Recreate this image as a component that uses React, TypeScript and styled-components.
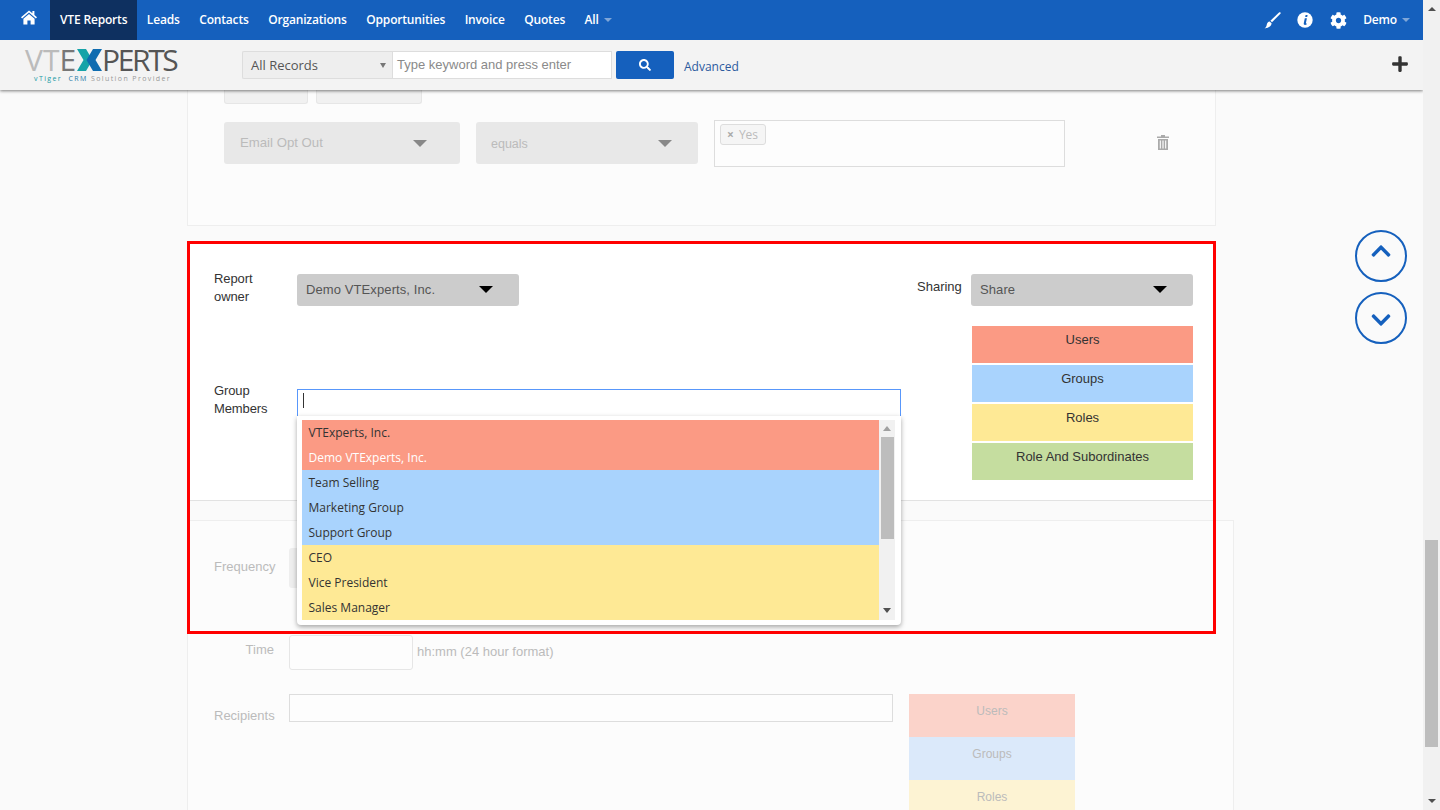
import React from "react";
import styled, { createGlobalStyle } from "styled-components";
import { FaCog, FaPlus, FaSearch, FaChevronUp, FaChevronDown } from "react-icons/fa";

const Global = createGlobalStyle`
  html, body { margin: 0; padding: 0; height: 100%; overflow: hidden; background: #fafafa; }
  * { box-sizing: border-box; }
`;

const BLUE = "#1560bd";
const RED = "#fb9a84";
const SKY = "#a9d3fd";
const YELLOW = "#fee995";
const GREEN = "#c5dd9f";

const Shell = styled.div`
  display: flex;
  width: 1440px;
  height: 810px;
  overflow: hidden;
`;

const Viewport = styled.div`
  position: relative;
  width: 1423px;
  height: 810px;
  overflow: hidden;
  background: #fafafa;
`;

const Header = styled.header`
  position: relative;
  z-index: 5;
  box-shadow: 0 1px 3px rgba(0, 0, 0, 0.5);
`;

const TopBar = styled.nav`
  display: flex;
  align-items: stretch;
  height: 40px;
  background: ${BLUE};
  font: 600 12px/40px "Open Sans", sans-serif;
  letter-spacing: -0.17px;
  color: #fff;
`;

const HomeLink = styled.div`
  display: flex;
  align-items: flex-start;
  width: 50px;
  padding: 10px 0 0 21px;
`;

const NavItem = styled.div<{ $active?: boolean }>`
  display: flex;
  align-items: center;
  padding: 0 9.5px 0 10px;
  background: ${(p) => (p.$active ? "#0e3060" : "transparent")};
`;

const NavCaret = styled.span`
  display: block;
  width: 0;
  height: 0;
  margin-left: 5px;
  border-left: 4px solid transparent;
  border-right: 4px solid transparent;
  border-top: 4px solid #7fa6d8;
`;

const TopRight = styled.div`
  display: flex;
  align-items: center;
  margin-left: auto;
  padding-right: 13px;
`;

const TopIcon = styled.span<{ $gap: number; $size: number }>`
  display: flex;
  margin-right: ${(p) => p.$gap}px;
  font-size: ${(p) => p.$size}px;
`;

const SubBar = styled.div`
  display: flex;
  align-items: flex-start;
  height: 50px;
  background: #f3f3f3;
  padding-top: 11px;
`;

const Logo = styled.div`
  width: 242px;
  margin-top: -4px;
  padding-left: 25px;
`;

const LogoWord = styled.div`
  display: flex;
  align-items: center;
  height: 26px;
  font: 400 30px/26px "Open Sans", sans-serif;
`;

const LogoPart = styled.span<{ $color: string; $track: number }>`
  color: ${(p) => p.$color};
  letter-spacing: ${(p) => p.$track}px;
`;

const LogoMark = styled.svg`
  width: 25px;
  height: 22px;
`;

const Tagline = styled.div`
  padding-left: 9px;
  font: 400 7px/12px "Open Sans", sans-serif;
  letter-spacing: 1.4px;
  white-space: pre;
  color: #999;
`;

const TagPart = styled.span<{ $color: string }>`
  color: ${(p) => p.$color};
`;

const SearchScope = styled.div`
  display: flex;
  align-items: center;
  justify-content: space-between;
  width: 150px;
  height: 28px;
  padding: 0 6px 0 8px;
  background: #eee;
  border: 1px solid #ddd;
  border-right: 0;
  border-radius: 2px 0 0 2px;
  font: 400 13px "Open Sans", sans-serif;
  color: #555;
`;

const SearchInput = styled.div`
  width: 220px;
  height: 28px;
  padding-left: 4px;
  background: #fff;
  border: 1px solid #ddd;
  font: 400 13px/25px "Liberation Sans", sans-serif;
  color: #8a8a8a;
`;

const SearchButton = styled.div`
  display: flex;
  align-items: center;
  justify-content: center;
  width: 58px;
  height: 28px;
  margin-left: 4px;
  background: ${BLUE};
  border-radius: 2px;
  color: #fff;
  font-size: 12px;
`;

const AdvancedLink = styled.span`
  margin-left: 10px;
  font: 400 12px/32px "Open Sans", sans-serif;
  color: #2c5a9e;
`;

const AddButton = styled.div`
  display: flex;
  margin: 4px 14px 0 auto;
  font-size: 18px;
  color: #333;
`;

const Caret = styled.span<{ $color: string; $w: number; $h: number; $up?: boolean }>`
  display: block;
  flex: none;
  width: 0;
  height: 0;
  border-left: ${(p) => p.$w}px solid transparent;
  border-right: ${(p) => p.$w}px solid transparent;
  ${(p) => (p.$up ? "border-bottom" : "border-top")}: ${(p) => p.$h}px solid ${(p) => p.$color};
`;

const Main = styled.main`
  margin-left: 187px;
`;

const FilterCard = styled.section`
  width: 1029px;
  height: 136px;
  background: #fcfcfc;
  border: 1px solid #eee;
  border-top: 0;
  padding-left: 36px;
`;

const ClippedRow = styled.div`
  display: flex;
  gap: 8px;
`;

const ClippedButton = styled.div<{ $w: number }>`
  width: ${(p) => p.$w}px;
  height: 14px;
  background: #f1f1f1;
  border: 1px solid #e6e6e6;
  border-top: 0;
  border-radius: 0 0 3px 3px;
`;

const FilterRow = styled.div`
  display: flex;
  align-items: flex-start;
  gap: 16px;
  margin-top: 16px;
`;

const FadedSelect = styled.div<{ $w: number; $left: number; $right: number }>`
  display: flex;
  align-items: center;
  justify-content: space-between;
  width: ${(p) => p.$w}px;
  height: 42px;
  margin-top: 2px;
  padding: 0 ${(p) => p.$right}px 0 ${(p) => p.$left}px;
  background: #e8e8e8;
  border-radius: 3px;
  font: 400 13px "Liberation Sans", sans-serif;
  color: #bbb;
`;

const FieldText = styled.span<{ $top: number; $size: number }>`
  position: relative;
  top: ${(p) => p.$top}px;
  font-size: ${(p) => p.$size}px;
`;

const TagBox = styled.div`
  width: 351px;
  height: 47px;
  padding: 3px 5px;
  border: 1px solid #ddd;
  background: #fdfdfd;
`;

const Tag = styled.span`
  display: inline-flex;
  align-items: center;
  gap: 5px;
  width: 46px;
  height: 21px;
  padding: 0 6px;
  background: #f5f5f5;
  border: 1px solid #ddd;
  border-radius: 3px;
  font: 400 12px "Open Sans", sans-serif;
  color: #bbb;
`;

const TagX = styled.span`
  font-weight: 700;
  font-size: 12px;
  color: #aaa;
`;

const TrashIcon = styled.svg`
  flex: none;
  width: 12px;
  height: 15px;
  margin: 15px 0 0 76px;
`;

const SharePanel = styled.section`
  position: relative;
  display: flex;
  justify-content: space-between;
  width: 1029px;
  height: 260px;
  margin-top: 15px;
  padding: 33px 23px 0 27px;
  background: #fff;
  border-bottom: 1px solid #e2e2e2;
`;

const RedFrame = styled.div`
  position: absolute;
  top: 0;
  left: 0;
  z-index: 3;
  width: 1029px;
  height: 393px;
  border: 3px solid #f00;
  pointer-events: none;
`;

const Column = styled.div`
  display: flex;
  flex-direction: column;
`;

const Field = styled.div`
  display: flex;
  align-items: flex-start;
`;

const StackLabel = styled.label<{ $lift: number }>`
  width: 83px;
  margin-top: -${(p) => p.$lift}px;
  font: 400 13px/18px "Liberation Sans", sans-serif;
  letter-spacing: -0.1px;
  color: #333;
`;

const InlineLabel = styled.label`
  width: 54px;
  padding-top: 4px;
  font: 400 13px/18px "Liberation Sans", sans-serif;
  color: #333;
`;

const DarkSelect = styled.div`
  display: flex;
  align-items: center;
  justify-content: space-between;
  width: 222px;
  height: 32px;
  padding: 0 26px 2px 9px;
  background: #ccc;
  border-radius: 3px;
  font: 400 13px "Liberation Sans", sans-serif;
  letter-spacing: 0.1px;
  color: #555;
`;

const ChipList = styled.div`
  display: flex;
  flex-direction: column;
  gap: 2px;
  width: 221px;
  margin: 20px 0 0 55px;
`;

const Chip = styled.div<{ $bg: string }>`
  height: 37px;
  padding-top: 6px;
  background: ${(p) => p.$bg};
  text-align: center;
  font: 400 13px/16px "Liberation Sans", sans-serif;
  color: #333;
`;

const GroupField = styled(Field)`
  position: relative;
  margin-top: 83px;
`;

const MemberInput = styled.div`
  width: 604px;
  height: 27px;
  padding: 3px 5px;
  border: 1px solid #5897fb;
  border-bottom: 0;
  background: #fff;
`;

const TextCursor = styled.div`
  width: 1px;
  height: 15px;
  background: #333;
`;

const Dropdown = styled.div`
  position: absolute;
  top: 27px;
  left: 83px;
  z-index: 2;
  display: flex;
  width: 604px;
  height: 209px;
  padding: 4px 5px;
  background: #fff;
  border-radius: 0 0 4px 4px;
  box-shadow: 0 2px 5px rgba(0, 0, 0, 0.35);
`;

const OptionList = styled.ul`
  width: 577px;
  height: 200px;
  margin: 0;
  padding: 0;
  list-style: none;
`;

const Option = styled.li<{ $bg: string; $selected?: boolean }>`
  height: 25px;
  padding-left: 6.5px;
  background: ${(p) => p.$bg};
  font: 400 12px/25px "Open Sans", sans-serif;
  color: ${(p) => (p.$selected ? "#fff" : "#333")};
`;

const ListScroll = styled.div`
  display: flex;
  flex-direction: column;
  align-items: center;
  flex: none;
  width: 16px;
  height: 200px;
  padding: 6px 0 7px;
  background: #f1f1f1;
`;

const ListThumb = styled.div`
  width: 13px;
  height: 102px;
  margin: 6px 0 auto;
  background: #bdbdbd;
`;

const ScheduleCard = styled.section`
  width: 1047px;
  height: 300px;
  margin-top: 19px;
  padding: 27px 0 0 26px;
  background: #fcfcfc;
  border: 1px solid #eee;
`;

const ScheduleRow = styled.div<{ $mt?: number }>`
  display: flex;
  align-items: flex-start;
  margin-top: ${(p) => p.$mt ?? 0}px;
`;

const FadedLabel = styled.label<{ $top: number }>`
  width: 60px;
  margin-right: 15px;
  padding-top: ${(p) => p.$top}px;
  text-align: right;
  font: 400 13px/16px "Liberation Sans", sans-serif;
  color: #bbb;
`;

const FrequencySelect = styled.div`
  width: 124px;
  height: 40px;
  background: #eee;
  border-radius: 3px;
`;

const TimeInput = styled.div`
  width: 124px;
  height: 35px;
  background: #fdfdfd;
  border: 1px solid #e6e6e6;
  border-radius: 3px;
`;

const Hint = styled.span`
  margin: 9px 0 0 4px;
  font: 400 13px/16px "Liberation Sans", sans-serif;
  color: #bbb;
`;

const RecipientInput = styled.div`
  width: 604px;
  height: 28px;
  background: #fdfdfd;
  border: 1px solid #ddd;
`;

const FadedChips = styled.div`
  width: 166px;
  margin-left: 16px;
`;

const FadedChip = styled.div<{ $bg: string }>`
  height: 43px;
  padding-top: 9px;
  background: ${(p) => p.$bg};
  text-align: center;
  font: 400 12px/16px "Liberation Sans", sans-serif;
  color: #bbb;
`;

const FloatButtons = styled.div`
  position: absolute;
  top: 230px;
  left: 1355px;
  z-index: 4;
  display: flex;
  flex-direction: column;
  gap: 10px;
`;

const RoundButton = styled.div<{ $shift: number }>`
  display: flex;
  align-items: center;
  justify-content: center;
  width: 52px;
  height: 52px;
  padding-top: ${(p) => Math.max(p.$shift, 0) * 2}px;
  padding-bottom: ${(p) => Math.max(-p.$shift, 0) * 2}px;
  border: 2px solid ${BLUE};
  border-radius: 50%;
  color: ${BLUE};
  font-size: 22px;
`;

const PageScroll = styled.div`
  display: flex;
  flex-direction: column;
  align-items: center;
  width: 17px;
  height: 810px;
  padding: 7px 0;
  background: #f1f1f1;
`;

const PageThumb = styled.div`
  width: 13px;
  height: 207px;
  margin: auto 0 52px;
  background: #bdbdbd;
`;

const navItems = ["Leads", "Contacts", "Organizations", "Opportunities", "Invoice", "Quotes"];

const options = [
  { label: "VTExperts, Inc.", bg: RED },
  { label: "Demo VTExperts, Inc.", bg: RED, selected: true },
  { label: "Team Selling", bg: SKY },
  { label: "Marketing Group", bg: SKY },
  { label: "Support Group", bg: SKY },
  { label: "CEO", bg: YELLOW },
  { label: "Vice President", bg: YELLOW },
  { label: "Sales Manager", bg: YELLOW },
];

const chips = [
  { label: "Users", bg: RED },
  { label: "Groups", bg: SKY },
  { label: "Roles", bg: YELLOW },
  { label: "Role And Subordinates", bg: GREEN },
];

function HomeGlyph() {
  return (
    <svg width="16" height="15" viewBox="0 0 16 15" fill="#fff">
      <path d="M8 0.4 L11.4 3.3 V1 H13.4 V5 L16 7.2 L14.9 8.4 L8 2.6 L1.1 8.4 L0 7.2 Z" />
      <path d="M8 4 L13.6 8.7 V14.6 H9.6 V10.4 H6.4 V14.6 H2.4 V8.7 Z" />
    </svg>
  );
}

function BrushGlyph() {
  return (
    <svg width="17" height="17" viewBox="0 0 17 17" fill="#fff">
      <path d="M16.4 0.4 C16.9 0.8 16.8 1.3 16.4 1.8 L8 10.2 L6.4 8.8 L15 0.6 C15.5 0.2 16 0.1 16.4 0.4 Z" />
      <path d="M5.6 9.4 L7.6 11.2 C7.4 13.6 5.6 15.6 0.6 16.4 C2.2 15 2.6 13.8 2.8 12.4 C3 10.8 4.2 9.6 5.6 9.4 Z" />
    </svg>
  );
}

function InfoGlyph() {
  return (
    <svg width="16" height="16" viewBox="0 0 16 16">
      <circle cx="8" cy="8" r="7.7" fill="#fff" />
      <path d="M8.6 3 H10.6 L10.2 5 H8.2 Z M7.8 6.2 H9.9 L8.9 11 C8.8 11.5 9.1 11.6 9.8 11.4 L9.6 12.6 C7.9 13.3 6.4 13 6.8 11 Z" fill={BLUE} />
    </svg>
  );
}

export default function App() {
  return (
    <>
      <Global />
      <Shell>
        <Viewport>
          <Header>
            <TopBar>
              <HomeLink>
                <HomeGlyph />
              </HomeLink>
              <NavItem $active>VTE Reports</NavItem>
              {navItems.map((item) => (
                <NavItem key={item}>{item}</NavItem>
              ))}
              <NavItem>
                All
                <NavCaret />
              </NavItem>
              <TopRight>
                <TopIcon $gap={16} $size={16}>
                  <BrushGlyph />
                </TopIcon>
                <TopIcon $gap={17} $size={16}>
                  <InfoGlyph />
                </TopIcon>
                <TopIcon $gap={16} $size={17}>
                  <FaCog />
                </TopIcon>
                Demo
                <NavCaret />
              </TopRight>
            </TopBar>
            <SubBar>
              <Logo>
                <LogoWord>
                  <LogoPart $color="#bbb" $track={0}>VT</LogoPart>
                  <LogoPart $color="#777" $track={1}>E</LogoPart>
                  <LogoMark viewBox="0 0 25 22">
                    <polygon points="0,0 9,0 15.5,11 9,22 0,22 6.5,11" fill="#17a3a8" />
                    <polygon points="25,0 16,0 9.5,11 16,22 25,22 18.5,11" fill="#0f6cb0" />
                  </LogoMark>
                  <LogoPart $color="#555" $track={-2.4}>PERTS</LogoPart>
                </LogoWord>
                <Tagline>
                  <TagPart $color="#1a9aa5">vTiger</TagPart>{"  "}
                  <TagPart $color="#2a7ba8">CRM</TagPart> Solution Provider
                </Tagline>
              </Logo>
              <SearchScope>
                All Records
                <Caret $color="#777" $w={3} $h={5} />
              </SearchScope>
              <SearchInput>Type keyword and press enter</SearchInput>
              <SearchButton>
                <FaSearch />
              </SearchButton>
              <AdvancedLink>Advanced</AdvancedLink>
              <AddButton>
                <FaPlus />
              </AddButton>
            </SubBar>
          </Header>

          <Main>
            <FilterCard>
              <ClippedRow>
                <ClippedButton $w={84} />
                <ClippedButton $w={106} />
              </ClippedRow>
              <FilterRow>
                <FadedSelect $w={236} $left={16} $right={33}>
                  <FieldText $top={-1} $size={13.2}>Email Opt Out</FieldText>
                  <Caret $color="#888" $w={7} $h={7} />
                </FadedSelect>
                <FadedSelect $w={222} $left={15} $right={26}>
                  <FieldText $top={1} $size={12.5}>equals</FieldText>
                  <Caret $color="#888" $w={7} $h={7} />
                </FadedSelect>
                <TagBox>
                  <Tag>
                    <TagX>×</TagX>
                    Yes
                  </Tag>
                </TagBox>
                <TrashIcon viewBox="0 0 12 15" fill="#aaa">
                  <path d="M4 0 H8 V1.5 H12 V3 H0 V1.5 H4 Z" />
                  <path d="M1 4 H11 V15 H1 Z M2.8 5.5 V13.5 H3.9 V5.5 Z M5.4 5.5 V13.5 H6.6 V5.5 Z M8.1 5.5 V13.5 H9.2 V5.5 Z" fillRule="evenodd" />
                </TrashIcon>
              </FilterRow>
            </FilterCard>

            <SharePanel>
              <RedFrame />
              <Column>
                <Field>
                  <StackLabel $lift={4}>
                    Report
                    <br />
                    owner
                  </StackLabel>
                  <DarkSelect>
                    Demo VTExperts, Inc.
                    <Caret $color="#000" $w={7} $h={7} />
                  </DarkSelect>
                </Field>
                <GroupField>
                  <StackLabel $lift={7}>
                    Group
                    <br />
                    Members
                  </StackLabel>
                  <MemberInput>
                    <TextCursor />
                  </MemberInput>
                  <Dropdown>
                    <OptionList>
                      {options.map((o) => (
                        <Option key={o.label} $bg={o.bg} $selected={o.selected}>
                          {o.label}
                        </Option>
                      ))}
                    </OptionList>
                    <ListScroll>
                      <Caret $color="#a0a0a0" $w={4} $h={5} $up />
                      <ListThumb />
                      <Caret $color="#505050" $w={4} $h={5} />
                    </ListScroll>
                  </Dropdown>
                </GroupField>
              </Column>
              <Column>
                <Field>
                  <InlineLabel>Sharing</InlineLabel>
                  <DarkSelect>
                    Share
                    <Caret $color="#000" $w={7} $h={7} />
                  </DarkSelect>
                </Field>
                <ChipList>
                  {chips.map((c) => (
                    <Chip key={c.label} $bg={c.bg}>
                      {c.label}
                    </Chip>
                  ))}
                </ChipList>
              </Column>
            </SharePanel>

            <ScheduleCard>
              <ScheduleRow>
                <FadedLabel $top={11}>Frequency</FadedLabel>
                <FrequencySelect />
              </ScheduleRow>
              <ScheduleRow $mt={47}>
                <FadedLabel $top={7}>Time</FadedLabel>
                <TimeInput />
                <Hint>hh:mm (24 hour format)</Hint>
              </ScheduleRow>
              <ScheduleRow $mt={24}>
                <FadedLabel $top={14}>Recipients</FadedLabel>
                <RecipientInput />
                <FadedChips>
                  <FadedChip $bg="#fbd3ca">Users</FadedChip>
                  <FadedChip $bg="#dbe9fa">Groups</FadedChip>
                  <FadedChip $bg="#fdf3d3">Roles</FadedChip>
                </FadedChips>
              </ScheduleRow>
            </ScheduleCard>
          </Main>

          <FloatButtons>
            <RoundButton $shift={-5}>
              <FaChevronUp />
            </RoundButton>
            <RoundButton $shift={2}>
              <FaChevronDown />
            </RoundButton>
          </FloatButtons>
        </Viewport>
        <PageScroll>
          <Caret $color="#505050" $w={4} $h={4} $up />
          <PageThumb />
          <Caret $color="#505050" $w={4} $h={4} />
        </PageScroll>
      </Shell>
    </>
  );
}
